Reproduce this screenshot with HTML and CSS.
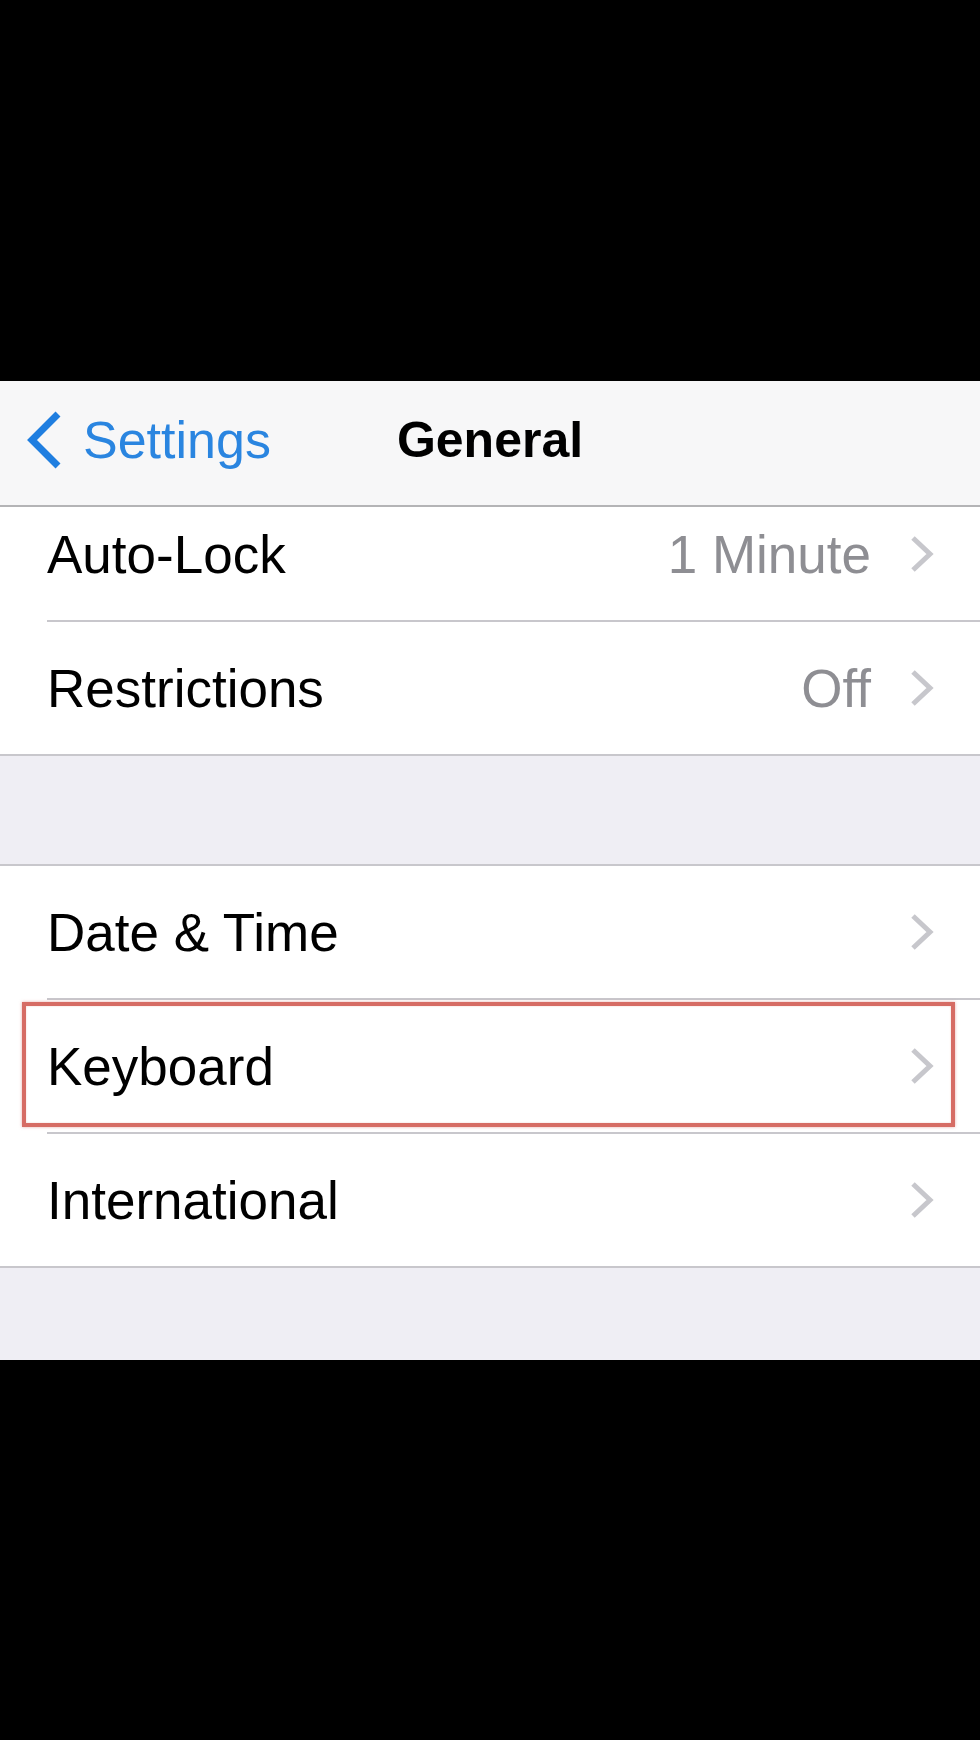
FILE: index.html
```html
<!DOCTYPE html>
<html lang="en">
<head>
<meta charset="utf-8">
<title>General</title>
<link rel="stylesheet" href="styles.css">
</head>
<body>
<div class="screen">
  <div class="black-band top"></div>
  <div class="phone">
    <header class="nav">
      <a class="back">
        <svg class="back-chevron" viewBox="0 0 38 60" width="38" height="60" aria-hidden="true">
          <polyline points="33,4 7,30 33,56" fill="none" stroke="#1f7ee0" stroke-width="7" stroke-linejoin="miter" stroke-linecap="butt"/>
        </svg>
        <span class="back-label">Settings</span>
      </a>
      <h1 class="title">General</h1>
      <span class="nav-spacer"></span>
    </header>
    <main class="content">
      <ul class="group group-first">
        <li class="row">
          <div class="row-inner">
            <span class="label">Auto-Lock</span>
            <span class="value">1 Minute</span>
            <svg class="disclosure" viewBox="0 0 24 38" width="24" height="38" aria-hidden="true"><polyline points="3,3 20,19 3,35" fill="none" stroke="#c7c7cc" stroke-width="5"/></svg>
          </div>
        </li>
        <li class="row">
          <div class="row-inner">
            <span class="label">Restrictions</span>
            <span class="value">Off</span>
            <svg class="disclosure" viewBox="0 0 24 38" width="24" height="38" aria-hidden="true"><polyline points="3,3 20,19 3,35" fill="none" stroke="#c7c7cc" stroke-width="5"/></svg>
          </div>
        </li>
      </ul>
      <ul class="group group-second">
        <li class="row">
          <div class="row-inner">
            <span class="label">Date &amp; Time</span>
            <svg class="disclosure" viewBox="0 0 24 38" width="24" height="38" aria-hidden="true"><polyline points="3,3 20,19 3,35" fill="none" stroke="#c7c7cc" stroke-width="5"/></svg>
          </div>
        </li>
        <li class="row row-highlighted">
          <div class="row-inner">
            <span class="label">Keyboard</span>
            <svg class="disclosure" viewBox="0 0 24 38" width="24" height="38" aria-hidden="true"><polyline points="3,3 20,19 3,35" fill="none" stroke="#c7c7cc" stroke-width="5"/></svg>
          </div>
          <span class="highlight-box"></span>
        </li>
        <li class="row">
          <div class="row-inner">
            <span class="label">International</span>
            <svg class="disclosure" viewBox="0 0 24 38" width="24" height="38" aria-hidden="true"><polyline points="3,3 20,19 3,35" fill="none" stroke="#c7c7cc" stroke-width="5"/></svg>
          </div>
        </li>
      </ul>
    </main>
  </div>
  <div class="black-band bottom"></div>
</div>
</body>
</html>
```

FILE: styles.css
```css
* {
  box-sizing: border-box;
}

html, body {
  margin: 0;
  padding: 0;
  background: #000;
}

body {
  font-family: "Liberation Sans", Arial, Helvetica, sans-serif;
  width: 980px;
  height: 1740px;
  overflow: hidden;
}

.screen {
  display: flex;
  flex-direction: column;
  width: 980px;
  height: 1740px;
}

.black-band {
  background: #000;
}

.black-band.top {
  height: 381px;
  flex: none;
}

.black-band.bottom {
  flex: 1;
}

.phone {
  display: flex;
  flex-direction: column;
  flex: none;
}

/* Navigation bar */
.nav {
  height: 126px;
  background: #f7f7f8;
  border-bottom: 2px solid #b4b4b6;
  display: grid;
  grid-template-columns: 1fr auto 1fr;
  align-items: center;
  padding-bottom: 6px;
}

.back {
  display: flex;
  align-items: center;
  padding-left: 25px;
  gap: 20px;
  color: #2a85e0;
}

.back-chevron {
  display: block;
  flex: none;
}

.back-label {
  font-size: 52px;
  line-height: 1;
  color: #2a85e0;
}

.title {
  margin: 0;
  font-size: 50px;
  font-weight: bold;
  line-height: 1;
  color: #000;
}

/* Content */
.content {
  height: 853px;
  overflow: hidden;
  background: #efeef4;
}

.group {
  list-style: none;
  margin: 0;
  padding: 0;
  background: #fff;
  border-bottom: 2px solid #c8c7cc;
}

.group-first {
  margin-top: -19px;
}

.group-second {
  margin-top: 108px;
  border-top: 2px solid #c8c7cc;
}

.row {
  position: relative;
  padding-left: 47px;
}

.row-inner {
  height: 134px;
  display: flex;
  align-items: center;
  padding-right: 46px;
  border-bottom: 2px solid #c8c7cc;
}

.row:last-child .row-inner {
  height: 132px;
  border-bottom: none;
}

.label {
  flex: 1;
  font-size: 53px;
  line-height: 1;
  color: #000;
}

.value {
  font-size: 53px;
  line-height: 1;
  color: #8e8e93;
  margin-right: 39px;
}

.disclosure {
  display: block;
  flex: none;
}

/* Annotation */
.highlight-box {
  position: absolute;
  left: 22px;
  right: 25px;
  top: 2px;
  bottom: 7px;
  border: 4px solid #d66c64;
  box-shadow: 0 0 3px rgba(214, 108, 100, 0.55), inset 0 0 2px rgba(214, 108, 100, 0.35);
  pointer-events: none;
}
```
